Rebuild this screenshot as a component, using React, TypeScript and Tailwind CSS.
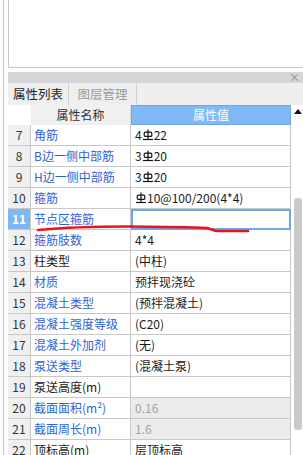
import React from "react";

type Row = {
  no: number;
  name: string;
  blue: boolean;
  value: React.ReactNode;
  grey?: boolean;
  selected?: boolean;
};

// Ⅲ级钢筋符号
function Rebar() {
  return (
    <svg width="10" height="12" viewBox="0 0 10 12" className="inline-block align-[-1px] mx-[1px]">
      <line x1="5" y1="0.5" x2="5" y2="10.5" stroke="#111" strokeWidth="1.2" />
      <rect x="1.2" y="3.2" width="7.6" height="4.2" rx="1.2" fill="none" stroke="#111" strokeWidth="1.2" />
      <line x1="0" y1="10.5" x2="10" y2="10.5" stroke="#111" strokeWidth="1.2" />
    </svg>
  );
}

const ROWS: Row[] = [
  { no: 7, name: "角筋", blue: true, value: <>4<Rebar />22</> },
  { no: 8, name: "B边一侧中部筋", blue: true, value: <>3<Rebar />20</> },
  { no: 9, name: "H边一侧中部筋", blue: true, value: <>3<Rebar />20</> },
  { no: 10, name: "箍筋", blue: true, value: <><Rebar />10@100/200(4*4)</> },
  { no: 11, name: "节点区箍筋", blue: true, value: "", selected: true },
  { no: 12, name: "箍筋肢数", blue: true, value: "4*4" },
  { no: 13, name: "柱类型", blue: false, value: "(中柱)" },
  { no: 14, name: "材质", blue: true, value: "预拌现浇砼" },
  { no: 15, name: "混凝土类型", blue: true, value: "(预拌混凝土)" },
  { no: 16, name: "混凝土强度等级", blue: true, value: "(C20)" },
  { no: 17, name: "混凝土外加剂", blue: true, value: "(无)" },
  { no: 18, name: "泵送类型", blue: true, value: "(混凝土泵)" },
  { no: 19, name: "泵送高度(m)", blue: false, value: "" },
  { no: 20, name: "截面面积(m²)", blue: true, value: "0.16", grey: true },
  { no: 21, name: "截面周长(m)", blue: true, value: "1.6", grey: true },
  { no: 22, name: "顶标高(m)", blue: false, value: "层顶标高" },
];

export default function App() {
  return (
    <div
      className="relative w-[303px] h-[455px] overflow-hidden bg-white flex text-[12px] leading-none"
      style={{ fontFamily: '"Noto Sans CJK SC", "Noto Sans", sans-serif' }}
    >
      <div className="w-[3px] shrink-0" />
      <div className="w-[5px] shrink-0 border-l border-[#c8c8c8]" />
      <div className="flex-1 flex flex-col">
        {/* 上方空白面板 */}
        <div className="h-[68px] shrink-0 border-l border-b border-[#c8c8c8] bg-white" />
        <div className="h-[4px] shrink-0" />
        {/* 标题栏 */}
        <div className="h-[11px] shrink-0 bg-[#d5d6da] flex items-center justify-end pr-[3px]">
          <span className="text-[11px] text-[#8a8a8a] leading-none">×</span>
        </div>
        {/* 选项卡 */}
        <div className="h-[22px] shrink-0 bg-[#efefef] flex text-[12.5px]">
          <div className="w-[61px] flex items-center justify-center text-[#222] border-r border-[#cfcfcf]">属性列表</div>
          <div className="w-[68px] flex items-center justify-center text-[#9a9a9a] border-r border-[#cfcfcf]">图层管理</div>
        </div>
        {/* 表格 + 滚动条 */}
        <div className="flex flex-1">
          <div className="w-[283px] flex flex-col">
            <div className="h-[20px] flex">
              <div className="w-[23px] bg-white" />
              <div className="w-[100px] bg-[#f0f0f0] border-r border-[#dcdcdc] flex items-center justify-center text-[#333]">
                属性名称
              </div>
              <div className="w-[160px] bg-[#80b9f6] border border-[#6aa6e8] flex items-center justify-center text-white">
                属性值
              </div>
            </div>
            {ROWS.map((r) => (
              <div key={r.no} className="h-[21px] flex shrink-0">
                <div
                  className={
                    r.selected
                      ? "w-[23px] bg-[#7db7f4] border-r border-b border-[#c8c8c8] flex items-center justify-center text-white font-bold"
                      : "w-[23px] bg-[#f0f0f0] border-r border-b border-[#c8c8c8] flex items-center justify-center text-[#333]"
                  }
                >
                  {r.no}
                </div>
                <div
                  className={
                    r.blue
                      ? "w-[100px] border-r border-b border-[#c8c8c8] flex items-center pl-[3px] text-[#2f63d6] whitespace-nowrap"
                      : "w-[100px] border-r border-b border-[#c8c8c8] flex items-center pl-[3px] text-[#1a1a1a] whitespace-nowrap"
                  }
                >
                  {r.name}
                </div>
                {r.selected ? (
                  <div className="w-[160px] border-2 border-[#6ea8e6] bg-white" />
                ) : (
                  <div
                    className={
                      r.grey
                        ? "w-[160px] border-r border-b border-[#c8c8c8] bg-[#ebebeb] flex items-center pl-[4px] text-[#a3a3a3] whitespace-nowrap"
                        : "w-[160px] border-r border-b border-[#c8c8c8] flex items-center pl-[4px] text-[#1a1a1a] whitespace-nowrap"
                    }
                  >
                    {r.value}
                  </div>
                )}
              </div>
            ))}
          </div>
          {/* 滚动条 */}
          <div className="flex-1 flex flex-col items-center bg-white">
            <svg width="8" height="5" viewBox="0 0 8 5" className="mt-[4px] ml-[1px]">
              <polygon points="4,0 8,5 0,5" fill="#111" />
            </svg>
            <div className="mt-[84px] ml-[2px] w-[8px] h-[232px] rounded-[3px] bg-[#c9c9c9]" />
          </div>
        </div>
      </div>
      {/* 红色手绘下划线 */}
      <svg className="absolute left-0 top-0 pointer-events-none" width="303" height="455">
        <path
          d="M38 230 C 80 226, 150 226, 207 228 L 216 231 L 248 231"
          fill="none"
          stroke="#e8141c"
          strokeWidth="2.6"
          strokeLinecap="round"
          strokeLinejoin="round"
        />
      </svg>
    </div>
  );
}
